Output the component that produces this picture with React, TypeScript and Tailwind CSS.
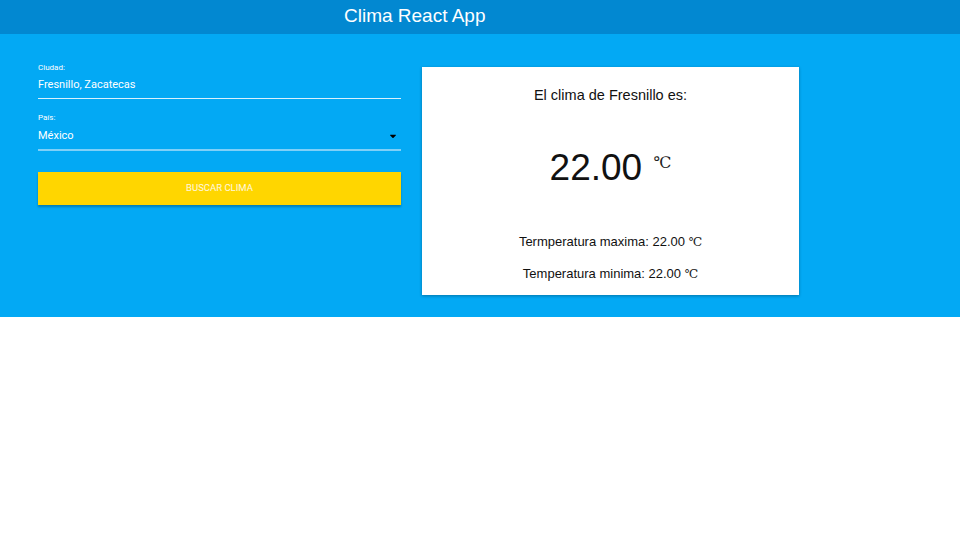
import { FaCaretDown } from 'react-icons/fa';

const Celsius = ({ size }: { size: string }) => (
    <span className={`font-['Liberation_Serif','DejaVu_Serif',serif] text-[#222] ${size}`}>℃</span>
);

const Formulario = () => {
    return (
        <div className="w-[363px] ml-[38px] pt-[28px] font-['Roboto','Noto_Sans',sans-serif] text-white">
            <div>
                <label className="block text-[8px] leading-[12px]">Ciudad:</label>
                <div className="text-[11px] leading-[14px] mt-[4px] pb-[6px] border-b border-[#d9f1fd]">Fresnillo, Zacatecas</div>
            </div>
            <div className="mt-[13px]">
                <label className="block text-[8px] leading-[12px]">País:</label>
                <div className="flex items-center justify-between text-[11px] leading-[14px] mt-[5px] pb-[6px] border-b-2 border-[#7fd0f8]">
                    <span>México</span>
                    <FaCaretDown className="text-black text-[10px] mr-[3px]" />
                </div>
            </div>
            <button className="mt-[21px] w-full h-[33px] bg-[#ffd600] text-[#fff8e0] text-[9.5px] uppercase shadow-[0_2px_2px_rgba(0,0,0,0.25)]" type="button">Buscar clima</button>
        </div>
    );
};

const Clima = () => {
    return (
        <div className="w-[377px] h-[228px] ml-[21px] mt-[33px] bg-white shadow-[0_1px_3px_rgba(0,0,0,0.3)] font-['Liberation_Sans','Arial',sans-serif] text-[#111] text-center flex flex-col">
            <h2 className="text-[14.5px] leading-[18px] mt-[19px]">El clima de Fresnillo es:</h2>
            <p className="mt-[44px] text-[37px] leading-[40px]">
                22.00 <span className="relative top-[-12px] ml-[1px]"><Celsius size="text-[16px]" /></span>
            </p>
            <p className="mt-[39px] text-[13px] leading-[16px]">Termperatura maxima: 22.00 <Celsius size="text-[12px]" /></p>
            <p className="mt-[16px] text-[13px] leading-[16px]">Temperatura minima: 22.00 <Celsius size="text-[12px]" /></p>
        </div>
    );
};

const App = () => {
    return (
        <div className="min-h-[540px] bg-white">
            <nav className="h-[34px] bg-[#0288d1] shadow-[0_1px_2px_rgba(0,0,0,0.15)]">
                <div className="pl-[344px] pt-[4px] text-white text-[19px] leading-[24px] font-['Liberation_Sans','Arial',sans-serif]">Clima React App</div>
            </nav>
            <div className="h-[283px] bg-[#03a9f4] flex items-start">
                <Formulario />
                <Clima />
            </div>
        </div>
    );
};

export default App;
